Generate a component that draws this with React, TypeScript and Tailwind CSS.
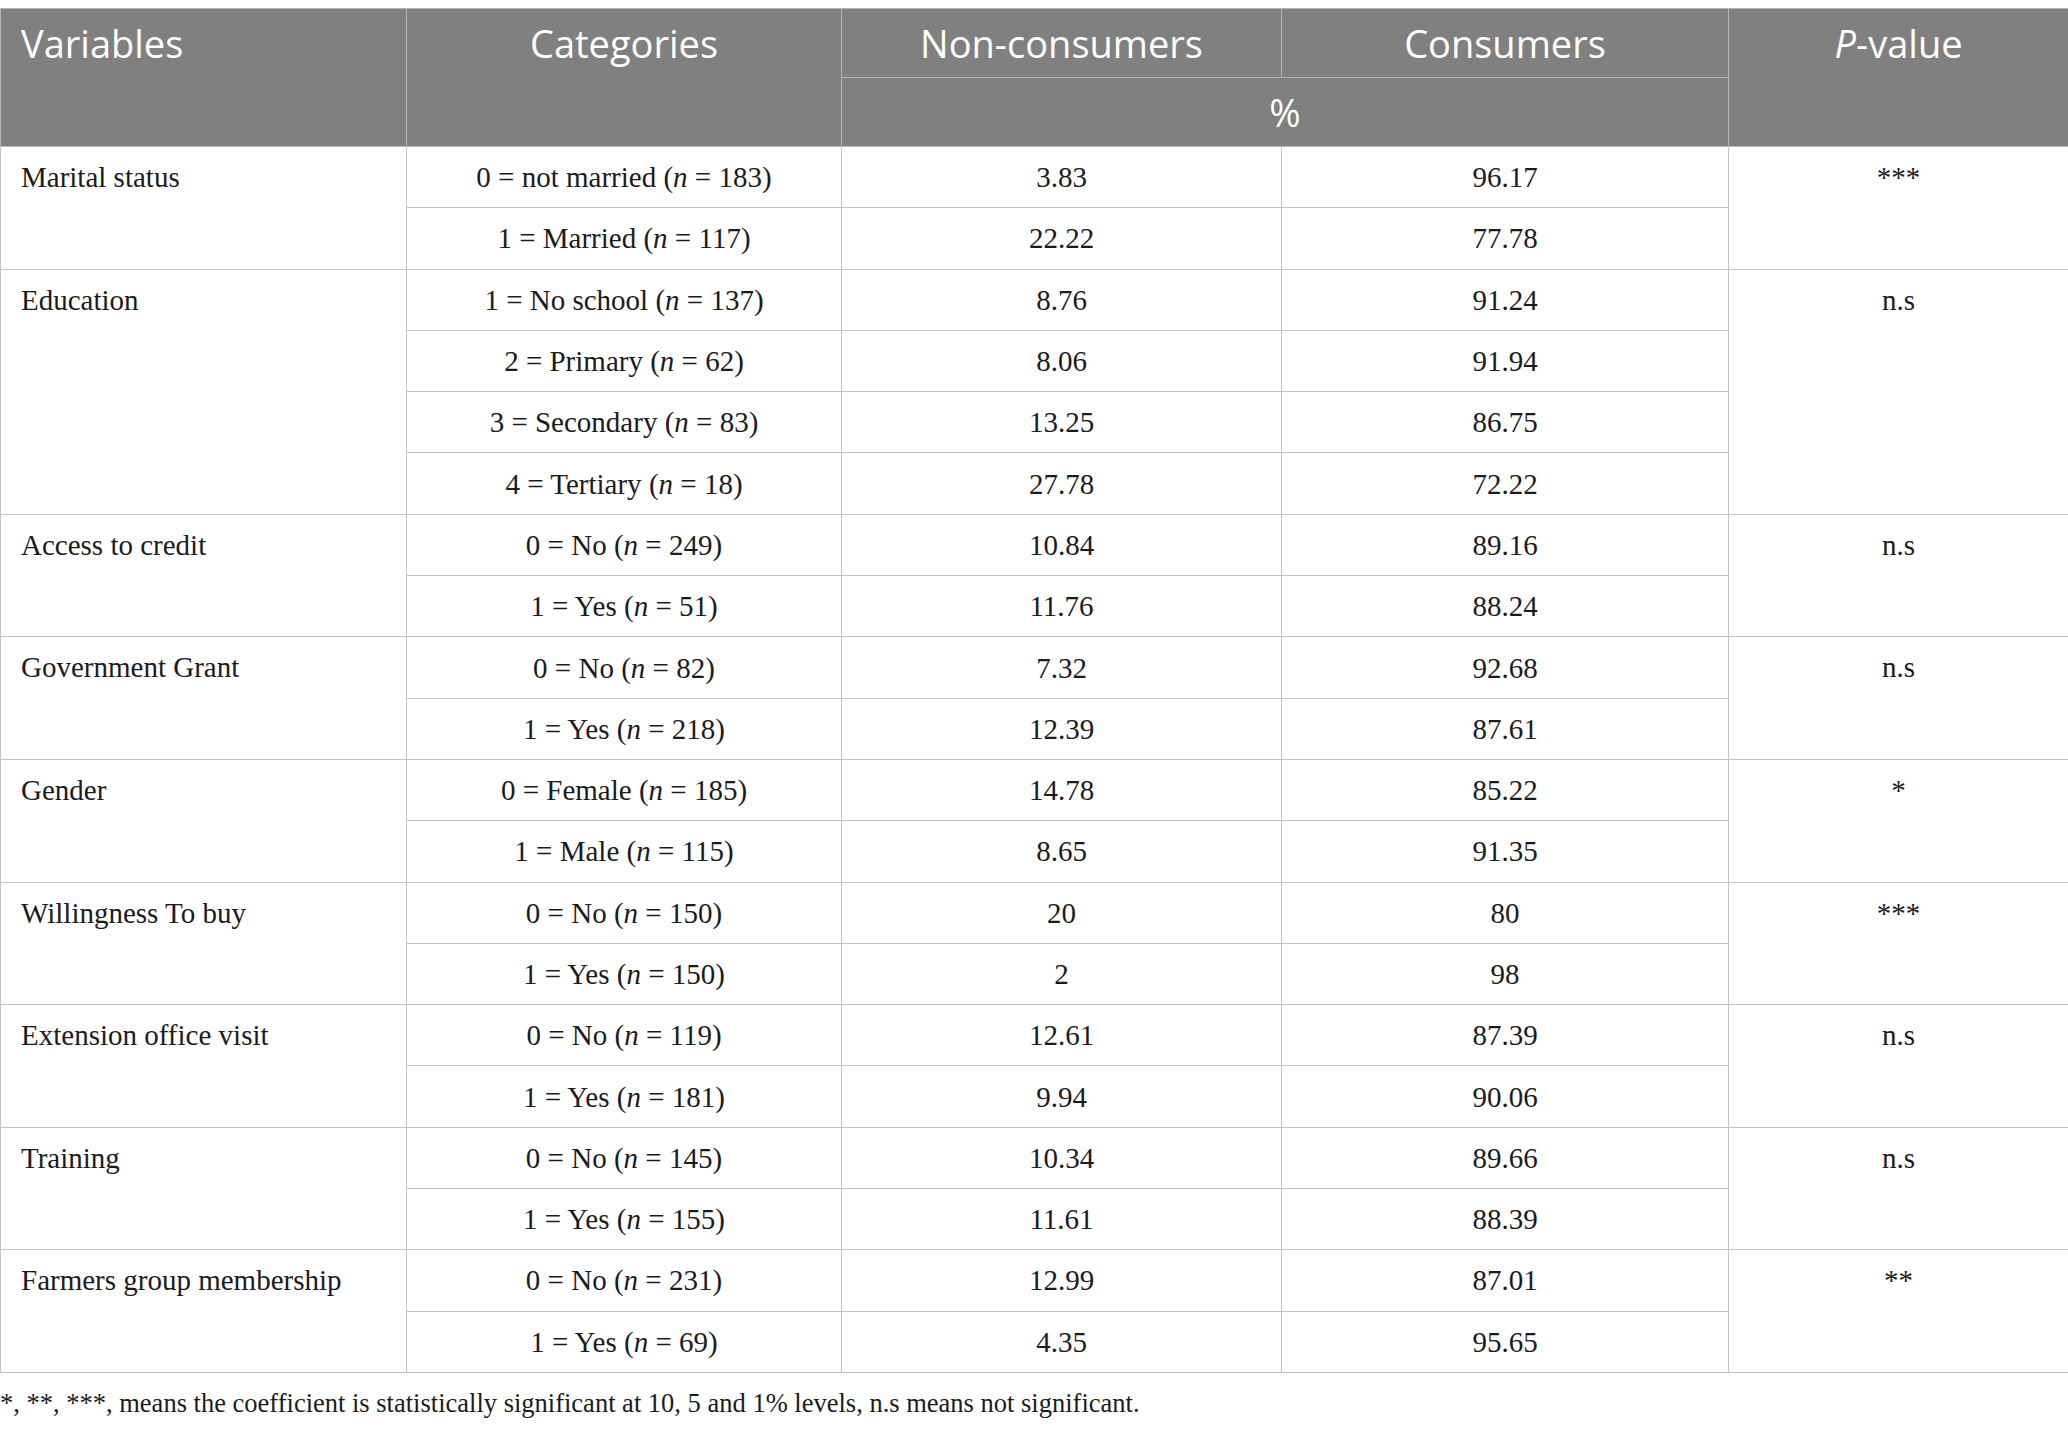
import type { ReactNode } from "react";

type Group = {
  name: string;
  p: string;
  rows: [ReactNode, string, string][];
};

const n = (label: string, count: number): ReactNode => (
  <>
    {label} (<i>n</i> = {count})
  </>
);

const groups: Group[] = [
  {
    name: "Marital status",
    p: "***",
    rows: [
      [n("0 = not married", 183), "3.83", "96.17"],
      [n("1 = Married", 117), "22.22", "77.78"],
    ],
  },
  {
    name: "Education",
    p: "n.s",
    rows: [
      [n("1 = No school", 137), "8.76", "91.24"],
      [n("2 = Primary", 62), "8.06", "91.94"],
      [n("3 = Secondary", 83), "13.25", "86.75"],
      [n("4 = Tertiary", 18), "27.78", "72.22"],
    ],
  },
  {
    name: "Access to credit",
    p: "n.s",
    rows: [
      [n("0 = No", 249), "10.84", "89.16"],
      [n("1 = Yes", 51), "11.76", "88.24"],
    ],
  },
  {
    name: "Government Grant",
    p: "n.s",
    rows: [
      [n("0 = No", 82), "7.32", "92.68"],
      [n("1 = Yes", 218), "12.39", "87.61"],
    ],
  },
  {
    name: "Gender",
    p: "*",
    rows: [
      [n("0 = Female", 185), "14.78", "85.22"],
      [n("1 = Male", 115), "8.65", "91.35"],
    ],
  },
  {
    name: "Willingness To buy",
    p: "***",
    rows: [
      [n("0 = No", 150), "20", "80"],
      [n("1 = Yes", 150), "2", "98"],
    ],
  },
  {
    name: "Extension office visit",
    p: "n.s",
    rows: [
      [n("0 = No", 119), "12.61", "87.39"],
      [n("1 = Yes", 181), "9.94", "90.06"],
    ],
  },
  {
    name: "Training",
    p: "n.s",
    rows: [
      [n("0 = No", 145), "10.34", "89.66"],
      [n("1 = Yes", 155), "11.61", "88.39"],
    ],
  },
  {
    name: "Farmers group membership",
    p: "**",
    rows: [
      [n("0 = No", 231), "12.99", "87.01"],
      [n("1 = Yes", 69), "4.35", "95.65"],
    ],
  },
];

const th = "border border-[#b4b4b4] p-0 font-normal";
const td = "border border-[#c4c4c4] h-[61.3px] p-0 text-center align-middle";

export default function App() {
  return (
    <div className="min-h-screen bg-white pt-[8px] font-['Liberation_Serif',serif] text-[#1b1b1b]">
      <table className="w-[2068px] table-fixed border-collapse border border-[#c4c4c4]">
        <colgroup>
          <col className="w-[406px]" />
          <col className="w-[435px]" />
          <col className="w-[440px]" />
          <col className="w-[447px]" />
          <col className="w-[340px]" />
        </colgroup>
        <thead className="bg-[#808080] font-['Open_Sans',sans-serif] text-[38px] leading-[68px] text-white">
          <tr className="h-[67px]">
            <th rowSpan={2} className={`${th} pl-[20px] text-left align-top`}>
              Variables
            </th>
            <th rowSpan={2} className={`${th} text-center align-top`}>
              Categories
            </th>
            <th className={`${th} text-center`}>Non-consumers</th>
            <th className={`${th} text-center`}>Consumers</th>
            <th rowSpan={2} className={`${th} text-center align-top`}>
              <i>P</i>-value
            </th>
          </tr>
          <tr className="h-[66px]">
            <th colSpan={2} className={`${th} text-center`}>
              %
            </th>
          </tr>
        </thead>
        <tbody className="text-[29px] leading-[60px]">
          {groups.map((g) =>
            g.rows.map((r, i) => (
              <tr key={`${g.name}-${i}`}>
                {i === 0 && (
                  <td
                    rowSpan={g.rows.length}
                    className="border border-[#c4c4c4] p-0 pl-[20px] text-left align-top"
                  >
                    {g.name}
                  </td>
                )}
                <td className={td}>{r[0]}</td>
                <td className={td}>{r[1]}</td>
                <td className={td}>{r[2]}</td>
                {i === 0 && (
                  <td
                    rowSpan={g.rows.length}
                    className="border border-[#c4c4c4] p-0 text-center align-top"
                  >
                    {g.p}
                  </td>
                )}
              </tr>
            ))
          )}
        </tbody>
      </table>
      <p className="mt-[15px] text-[26.5px] leading-[30px]">
        *, **, ***, means the coefficient is statistically significant at 10, 5 and 1% levels, n.s means not significant.
      </p>
    </div>
  );
}
